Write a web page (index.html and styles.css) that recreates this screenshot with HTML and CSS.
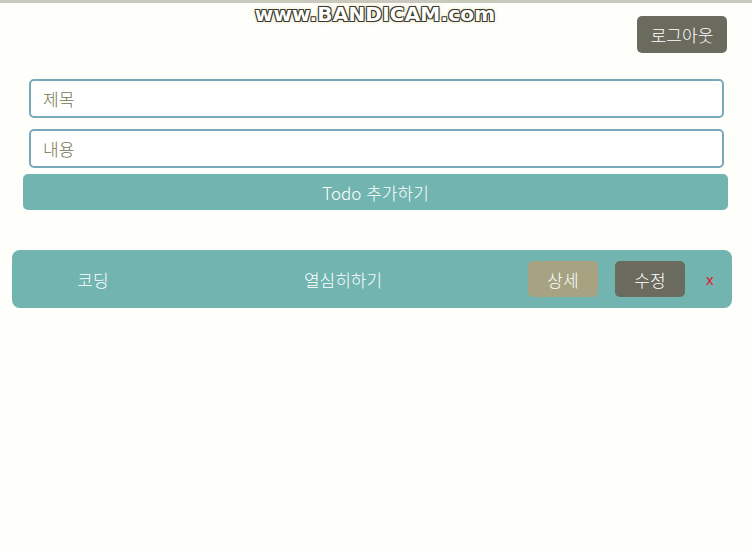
FILE: index.html
```html
<!DOCTYPE html>
<html lang="ko">
<head>
<meta charset="utf-8">
<link rel="stylesheet" href="styles.css">
</head>
<body>
<div class="topline"></div>
<div class="watermark">www.BANDICAM.com</div>
<div class="page">
  <header class="header">
    <button class="btn btn-logout">로그아웃</button>
  </header>
  <form class="form">
    <input class="field" type="text" placeholder="제목">
    <input class="field" type="text" placeholder="내용">
    <button type="button" class="btn btn-add">Todo 추가하기</button>
  </form>
  <ul class="list">
    <li class="todo">
      <span class="todo-title">코딩</span>
      <span class="todo-content">열심히하기</span>
      <button class="btn btn-detail">상세</button>
      <button class="btn btn-edit">수정</button>
      <span class="todo-del">x</span>
    </li>
  </ul>
</div>
</body>
</html>
```
FILE: styles.css
```css
* { box-sizing: border-box; }
html, body {
  margin: 0;
  padding: 0;
  background: #fefefb;
  font-family: "Noto Sans CJK KR", "Noto Sans", sans-serif;
}
.topline {
  height: 3px;
  background: #c9c8bd;
}
.watermark {
  position: absolute;
  top: 2px;
  left: 245px;
  width: 260px;
  text-align: center;
  font-family: "DejaVu Sans", sans-serif;
  font-weight: bold;
  font-size: 20px;
  letter-spacing: 0.2px;
  color: #ffffff;
  text-shadow: -1px -1px 0 #3a3a30, 1px -1px 0 #3a3a30, -1px 1px 0 #3a3a30, 1px 1px 0 #3a3a30, 0 0 4px #c9c070;
}
.page {
  padding-top: 13px;
}
.header {
  display: flex;
  justify-content: flex-end;
  padding-right: 25px;
}
.btn {
  border: none;
  border-radius: 5px;
  color: #ffffff;
  font-family: "Noto Sans CJK KR", "Noto Sans", sans-serif;
  font-size: 17px;
  font-weight: 300;
  cursor: pointer;
  padding: 0;
}
.btn-logout {
  width: 90px;
  height: 37px;
  background: #6b6a5e;
}
.form {
  display: flex;
  flex-direction: column;
  margin: 26px 0 0;
}
.field {
  height: 39px;
  margin: 0 28px 11px 29px;
  border: 2px solid #78a9ba;
  border-radius: 5px;
  background: #ffffff;
  padding: 0 12px;
  font-family: "Noto Sans CJK KR", "Noto Sans", sans-serif;
  font-size: 17px;
  font-weight: 300;
  color: #333;
  outline: none;
}
.field:nth-of-type(2) { margin-bottom: 6px; }
.field::placeholder { color: #6e7650; }
.btn-add {
  margin: 0 24px 0 23px;
  height: 36px;
  background: #71b4b0;
  font-size: 17px;
}
.list {
  list-style: none;
  margin: 40px 20px 0 12px;
  padding: 0;
}
.todo {
  display: flex;
  align-items: center;
  height: 58px;
  background: #71b4b0;
  border-radius: 8px;
  color: #ffffff;
  font-size: 17px;
  font-weight: 300;
}
.todo-title {
  width: 162px;
  text-align: center;
}
.todo-content {
  width: 338px;
  text-align: center;
}
.btn-detail {
  margin-left: 16px;
  width: 70px;
  height: 36px;
  background: #a6a282;
}
.btn-edit {
  margin-left: 17px;
  width: 70px;
  height: 36px;
  background: #6b6a5e;
}
.todo-del {
  margin-left: 21px;
  color: #e8102e;
  font-size: 15px;
  font-family: "Liberation Sans", sans-serif;
}
```
